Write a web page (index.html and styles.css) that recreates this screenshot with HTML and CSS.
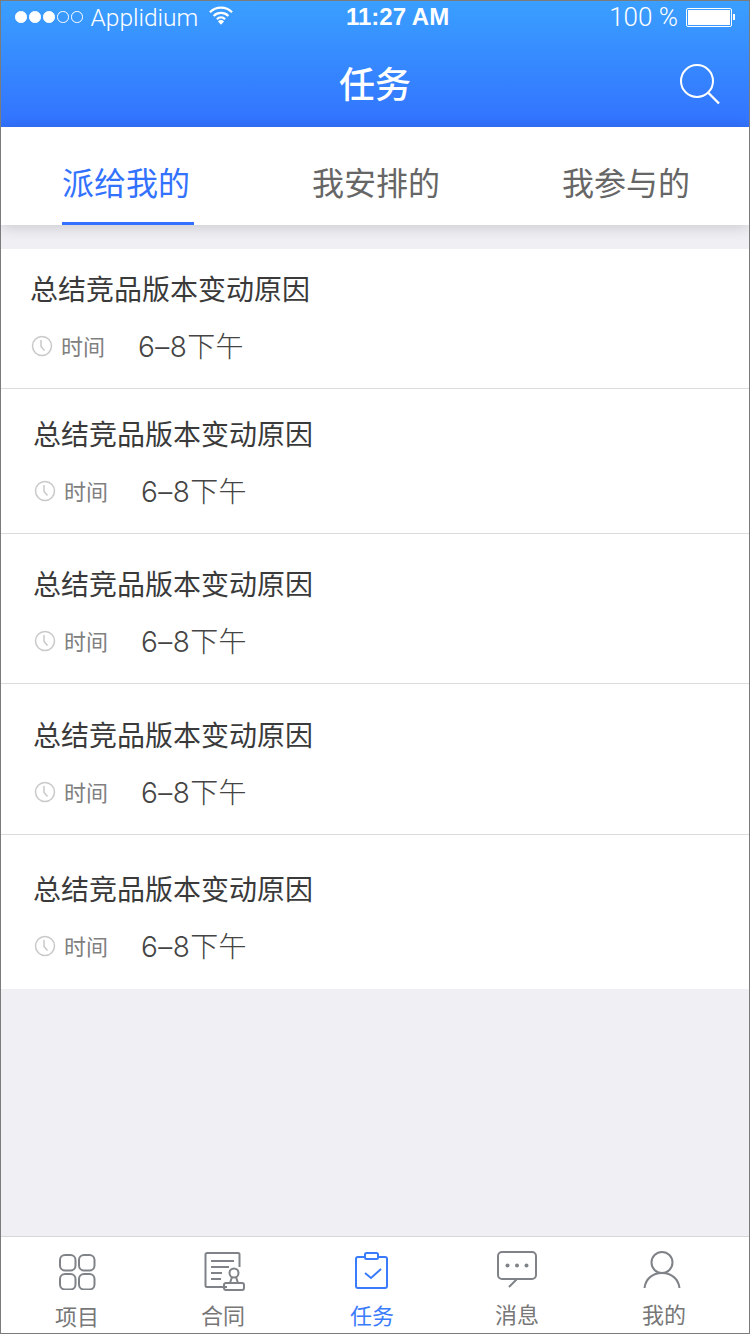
FILE: index.html
```html
<!DOCTYPE html><html>
<head>
<title>任务</title>
<meta charset="utf-8">
<link rel="stylesheet" href="styles.css">
</head>
<body>
<div class="screen">

<div class="top">
 <div class="status">
  <div class="status-left">
   <span class="dots"><i class="on"></i><i class="on"></i><i class="on"></i><i></i><i></i></span>
   <span class="carrier">Applidium</span>
   <svg class="wifi" width="24" height="19" viewBox="0 0 26 20"><path d="M1 6.500a17 17 0 0 1 24 0M5 10.500a11.500 11.500 0 0 1 16 0M8.600 14a6 6 0 0 1 8.800 0" fill="none" stroke="#fff" stroke-width="2.400"/><path d="M13 20l-3.300-3.600a4.600 4.600 0 0 1 6.600 0z" fill="#fff"/></svg>
  </div>
  <div class="clock">11:27 AM</div>
  <div class="status-right">
   <span class="percent">100 %</span>
   <span class="battery"><b></b></span><span class="battery-tip"></span>
  </div>
 </div>
 <div class="navbar">
  <h1>任务</h1>
  <svg class="search" width="42" height="42" viewBox="0 0 42 42"><circle cx="18" cy="18" r="16" fill="none" stroke="#fff" stroke-width="2"/><path d="M29.500 30l10.500 10.500" fill="none" stroke="#fff" stroke-width="2.400"/></svg>
 </div>
</div>

<div class="tabs">
 <a class="tab active">派给我的</a>
 <a class="tab">我安排的</a>
 <a class="tab">我参与的</a>
</div>

<div class="list">
 <div class="row first">
  <div class="row-title">总结竞品版本变动原因</div>
  <div class="row-meta">
   <svg class="clock-icon" width="22" height="22" viewBox="0 0 22 22"><circle cx="11" cy="11" r="9.500" fill="none" stroke="#c9c9c9" stroke-width="1.500"/><path d="M10 5v6.500l3.500 4" fill="none" stroke="#c9c9c9" stroke-width="1.500"/></svg>
   <span class="meta-label">时间</span><span class="meta-value">6–8下午</span>
  </div>
 </div>
 <div class="row second">
  <div class="row-title">总结竞品版本变动原因</div>
  <div class="row-meta">
   <svg class="clock-icon" width="22" height="22" viewBox="0 0 22 22"><circle cx="11" cy="11" r="9.500" fill="none" stroke="#c9c9c9" stroke-width="1.500"/><path d="M10 5v6.500l3.500 4" fill="none" stroke="#c9c9c9" stroke-width="1.500"/></svg>
   <span class="meta-label">时间</span><span class="meta-value">6–8下午</span>
  </div>
 </div>
 <div class="row third">
  <div class="row-title">总结竞品版本变动原因</div>
  <div class="row-meta">
   <svg class="clock-icon" width="22" height="22" viewBox="0 0 22 22"><circle cx="11" cy="11" r="9.500" fill="none" stroke="#c9c9c9" stroke-width="1.500"/><path d="M10 5v6.500l3.500 4" fill="none" stroke="#c9c9c9" stroke-width="1.500"/></svg>
   <span class="meta-label">时间</span><span class="meta-value">6–8下午</span>
  </div>
 </div>
 <div class="row fourth">
  <div class="row-title">总结竞品版本变动原因</div>
  <div class="row-meta">
   <svg class="clock-icon" width="22" height="22" viewBox="0 0 22 22"><circle cx="11" cy="11" r="9.500" fill="none" stroke="#c9c9c9" stroke-width="1.500"/><path d="M10 5v6.500l3.500 4" fill="none" stroke="#c9c9c9" stroke-width="1.500"/></svg>
   <span class="meta-label">时间</span><span class="meta-value">6–8下午</span>
  </div>
 </div>
 <div class="row last">
  <div class="row-title">总结竞品版本变动原因</div>
  <div class="row-meta">
   <svg class="clock-icon" width="22" height="22" viewBox="0 0 22 22"><circle cx="11" cy="11" r="9.500" fill="none" stroke="#c9c9c9" stroke-width="1.500"/><path d="M10 5v6.500l3.500 4" fill="none" stroke="#c9c9c9" stroke-width="1.500"/></svg>
   <span class="meta-label">时间</span><span class="meta-value">6–8下午</span>
  </div>
 </div>
</div>

<div class="tabbar">
 <a class="bar-item item1">
  <svg width="38" height="36" viewBox="0 0 38 36" fill="none" stroke="#7f8387" stroke-width="2"><rect x="2" y="1" width="15.500" height="15.500" rx="5"/><rect x="21" y="1" width="15.500" height="15.500" rx="5"/><rect x="2" y="20" width="15.500" height="15.500" rx="5"/><rect x="21" y="20" width="15.500" height="15.500" rx="5"/></svg>
  <span>项目</span>
 </a>
 <a class="bar-item item2">
  <svg width="42" height="40" viewBox="0 0 42 40" fill="none" stroke="#7f8387" stroke-width="2"><path d="M23 35H3a1.500 1.500 0 0 1-1.500-1.500V2.500A1.500 1.500 0 0 1 3 1h31a1.500 1.500 0 0 1 1.500 1.500V15"/><path d="M7 9h23M7 15h18M7 21h11M7 27h10"/><circle cx="30" cy="21" r="4.500"/><path d="M28 25l-2 6M32 25l2 6"/><rect x="20" y="31" width="20" height="7" rx="2"/></svg>
  <span>合同</span>
 </a>
 <a class="bar-item item3 active">
  <svg width="36" height="38" viewBox="0 0 36 38" fill="none" stroke="#3a7bfb" stroke-width="2"><path d="M10 5H4a2 2 0 0 0-2 2v27a2 2 0 0 0 2 2h27a2 2 0 0 0 2-2V7a2 2 0 0 0-2-2h-6"/><rect x="11" y="1" width="13" height="6" rx="1.500"/><path d="M11 21l6 5 10-9"/></svg>
  <span>任务</span>
 </a>
 <a class="bar-item item4">
  <svg width="42" height="38" viewBox="0 0 42 38" fill="none" stroke="#7f8387" stroke-width="2"><path d="M21 28h15a4 4 0 0 0 4-4V5a4 4 0 0 0-4-4H6a4 4 0 0 0-4 4v19a4 4 0 0 0 4 4h15l-8 8"/><circle cx="11.500" cy="14.500" r="2" fill="#7f8387" stroke="none"/><circle cx="21" cy="14.500" r="2" fill="#7f8387" stroke="none"/><circle cx="30.500" cy="14.500" r="2" fill="#7f8387" stroke="none"/></svg>
  <span>消息</span>
 </a>
 <a class="bar-item item5">
  <svg width="38" height="38" viewBox="0 0 38 38" fill="none" stroke="#7f8387" stroke-width="2"><circle cx="19" cy="11.500" r="10.500"/><path d="M1.500 37c1-9 8-15 17.500-15s16.500 6 17.500 15"/></svg>
  <span>我的</span>
 </a>
</div>

</div>
</body>
</html>
```
FILE: styles.css
```css
html, body { margin: 0; padding: 0; }
body { font-family: "Noto Sans CJK SC", "Liberation Sans", sans-serif; background: #fff; }

.screen { box-sizing: border-box; width: 750px; height: 1334px; border: 1px solid #7b7b7b; display: flex; flex-direction: column; background: #efeff4; overflow: hidden; }

/* blue header */
.top { height: 126px; flex: none; background: linear-gradient(#3a9fff, #3272ff); color: #fff; }
.status { height: 32px; display: flex; justify-content: space-between; align-items: center; position: relative; }
.status-left { display: flex; align-items: center; padding-left: 14px; }
.dots { display: flex; gap: 2.500px; }
.dots i { display: block; box-sizing: border-box; width: 11.500px; height: 11.500px; border: 1px solid #fff; border-radius: 50%; }
.dots i.on { background: #fff; }
.carrier { font-family: Roboto, sans-serif; font-weight: 300; font-size: 24.500px; margin-left: 8px; }
.wifi { margin-left: 11px; margin-top: -3px; }
.clock { position: absolute; left: 345px; top: 0; font-family: "Liberation Sans", sans-serif; font-weight: bold; font-size: 24px; line-height: 32px; }
.status-right { display: flex; align-items: center; padding-right: 14px; }
.percent { font-family: Roboto, sans-serif; font-weight: 300; font-size: 26px; margin-right: 8px; }
.battery { box-sizing: border-box; width: 46px; height: 19px; border: 1px solid #fff; border-radius: 2px; padding: 1px; display: block; }
.battery b { display: block; height: 100%; background: #fff; }
.battery-tip { display: block; width: 2px; height: 6px; background: #fff; margin-left: 1px; }

.navbar { height: 94px; display: flex; align-items: center; justify-content: center; position: relative; }
.navbar h1 { margin: 3px 0 0; font-size: 36px; font-weight: 500; line-height: 50px; }
.search { position: absolute; right: 28px; top: 30px; }

/* tabs */
.tabs { height: 98px; flex: none; background: #fff; display: flex; box-shadow: 0 2px 14px rgba(0,0,0,.16); position: relative; }
.tab { text-align: center; font-size: 32px; font-weight: 400; color: #666; line-height: 108px; height: 98px; box-sizing: border-box; flex: none; width: 250px; }
.tab.active { color: #3272ff; width: 132px; margin: 0 57px 0 61px; border-bottom: 3px solid #3272ff; text-indent: -4px; }

/* list */
.list { margin-top: 24px; flex: none; background: #fff; }
.row { box-sizing: border-box; padding-left: 32px; border-bottom: 1px solid #dcdcdc; }
.row.first { height: 140px; padding-left: 29px; padding-top: 19px; }
.row.second { height: 145px; padding-top: 24px; }
.row.third { height: 150px; padding-top: 29px; }
.row.fourth { height: 151px; padding-top: 30px; }
.row.last { height: 154px; padding-top: 33px; border-bottom: 0; }
.row-title { font-size: 28px; font-weight: 400; color: #3a3a3a; line-height: 40px; }
.row-meta { display: flex; align-items: center; height: 40px; margin-top: 17px; }
.clock-icon { flex: none; margin: 2px 0 0 1px; }
.meta-label { font-size: 22px; font-weight: 400; color: #808080; margin-left: 8px; width: 77px; }
.meta-value { font-family: Inter, "Noto Sans CJK SC", sans-serif; font-size: 28px; font-weight: 300; color: #444; letter-spacing: .4px; }

/* bottom bar */
.tabbar { margin-top: auto; height: 96px; flex: none; background: #fff; border-top: 1px solid #d6d6da; display: flex; }
.bar-item { display: flex; flex-direction: column; align-items: center; font-size: 22px; font-weight: 400; color: #777; line-height: 30px; }
.bar-item.active { color: #3a7bfb; }
.bar-item svg { display: block; flex: none; }
.bar-item span { display: block; }
.item1 { width: 152px; padding-top: 17px; }
.item1 span { margin-top: 10px; }
.item2 { width: 140px; padding-top: 15px; }
.item2 span { margin-top: 7px; }
.item2 svg { margin-left: 4px; }
.item3 { width: 158px; padding-top: 15px; }
.item3 span { margin-top: 9px; }
.item4 { width: 132px; padding-top: 14px; }
.item4 span { margin-top: 9px; }
.item5 { width: 162px; padding-top: 14px; }
.item5 svg { margin-left: -4px; }
.item5 span { margin-top: 9px; }
```
